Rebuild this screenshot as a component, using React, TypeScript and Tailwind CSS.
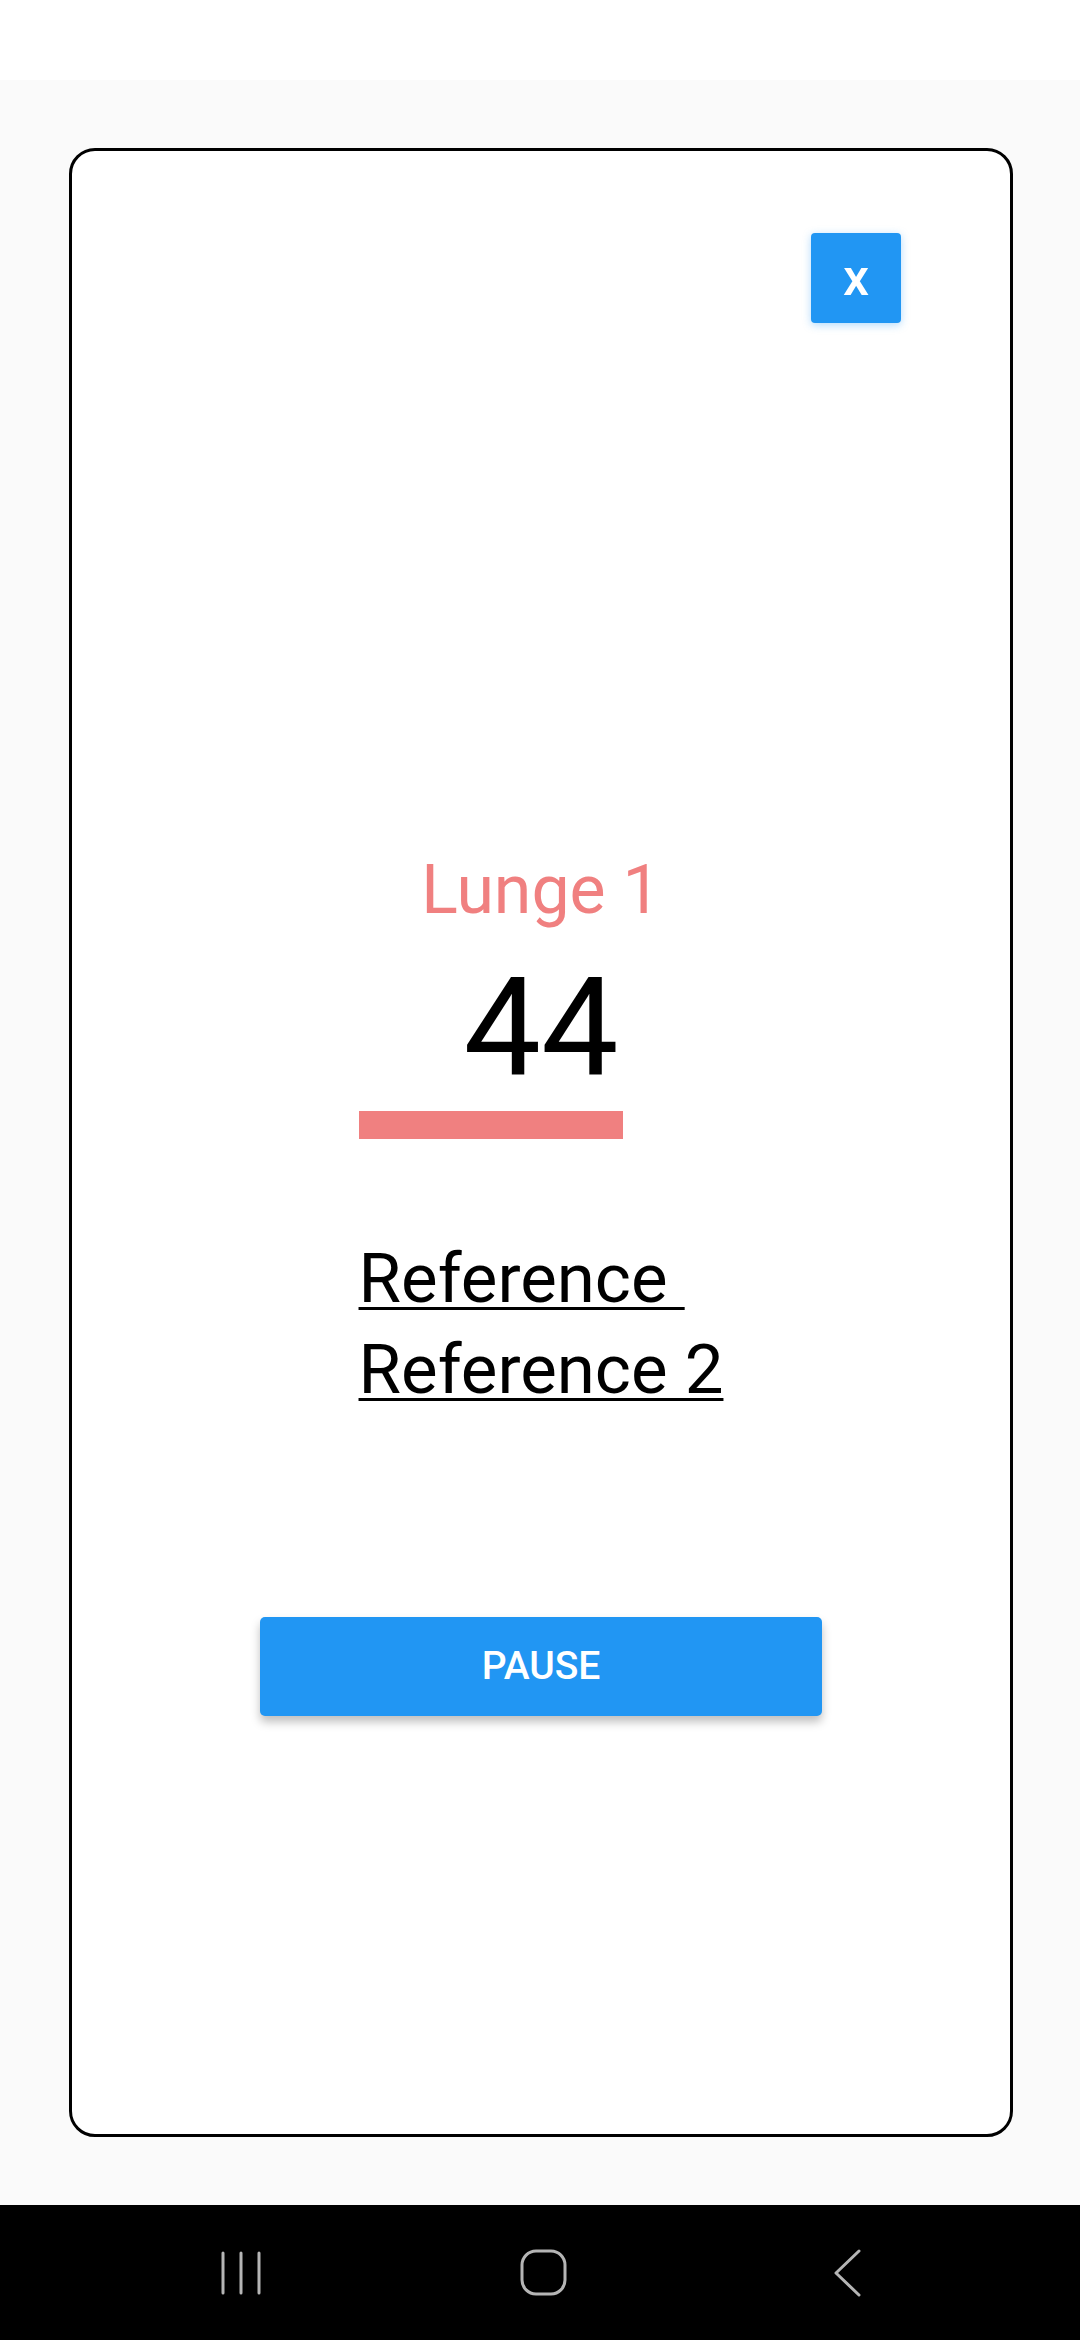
import React from "react";

const font = { fontFamily: "Roboto, 'Noto Sans', Arial, sans-serif" };

const NavBar = () => (
  <div className="h-[135px] bg-black flex items-center pl-[220px]">
    <svg width="44" height="46" viewBox="0 0 44 46" className="shrink-0">
      <g stroke="#b5b5b5" strokeWidth="3" strokeLinecap="round">
        <line x1="3" y1="3" x2="3" y2="43" />
        <line x1="21" y1="3" x2="21" y2="43" />
        <line x1="39" y1="3" x2="39" y2="43" />
      </g>
    </svg>
    <svg width="50" height="48" viewBox="0 0 50 48" className="shrink-0 ml-[255px]">
      <rect x="3" y="2" width="43" height="43" rx="14" fill="none" stroke="#b5b5b5" strokeWidth="3" />
    </svg>
    <svg width="30" height="48" viewBox="0 0 30 48" className="shrink-0 ml-[263px]">
      <polyline points="27,2 4,24 27,46" fill="none" stroke="#b5b5b5" strokeWidth="3" strokeLinecap="round" strokeLinejoin="round" />
    </svg>
  </div>
);

export default function App() {
  return (
    <div className="w-[1080px] h-[2340px] flex flex-col bg-white" style={font}>
      <div className="h-[80px] bg-white" />

      <div className="h-[2125px] bg-[#fafafa] pt-[68px] pl-[69px]">
        <div className="w-[944px] h-[1989px] bg-white border-[3px] border-black rounded-[26px] flex flex-col">
          <div className="flex justify-end pt-[82px] pr-[109px]">
            <button className="w-[90px] h-[90px] bg-[#2196f3] rounded-[4px] shadow-[0_2px_8px_rgba(33,150,243,0.35)] text-white text-[52px] leading-[90px] font-medium">
              x
            </button>
          </div>

          <div className="mt-[527px] self-center flex flex-col items-start">
            <div className="self-stretch text-center text-[68px] leading-[80px] text-[#f08080]">Lunge 1</div>
            <div className="self-stretch text-center text-[138px] leading-[140px] text-black mt-[28px]">44</div>
            <div className="w-[264px] h-[28px] bg-[#f08080] mt-[13px]" />
            <a className="block mt-[94px] text-[69px] leading-[91px] text-black underline decoration-[3px] underline-offset-[5px] whitespace-pre">
              {"Reference "}
            </a>
            <a className="block text-[69px] leading-[91px] text-black underline decoration-[3px] underline-offset-[5px] whitespace-pre">
              Reference 2
            </a>
          </div>

          <button className="self-center mt-[202px] w-[562px] h-[99px] bg-[#2196f3] rounded-[5px] shadow-[0_6px_10px_rgba(0,0,0,0.25)] text-white text-[39px] font-medium">
            PAUSE
          </button>
        </div>
      </div>

      <NavBar />
    </div>
  );
}
